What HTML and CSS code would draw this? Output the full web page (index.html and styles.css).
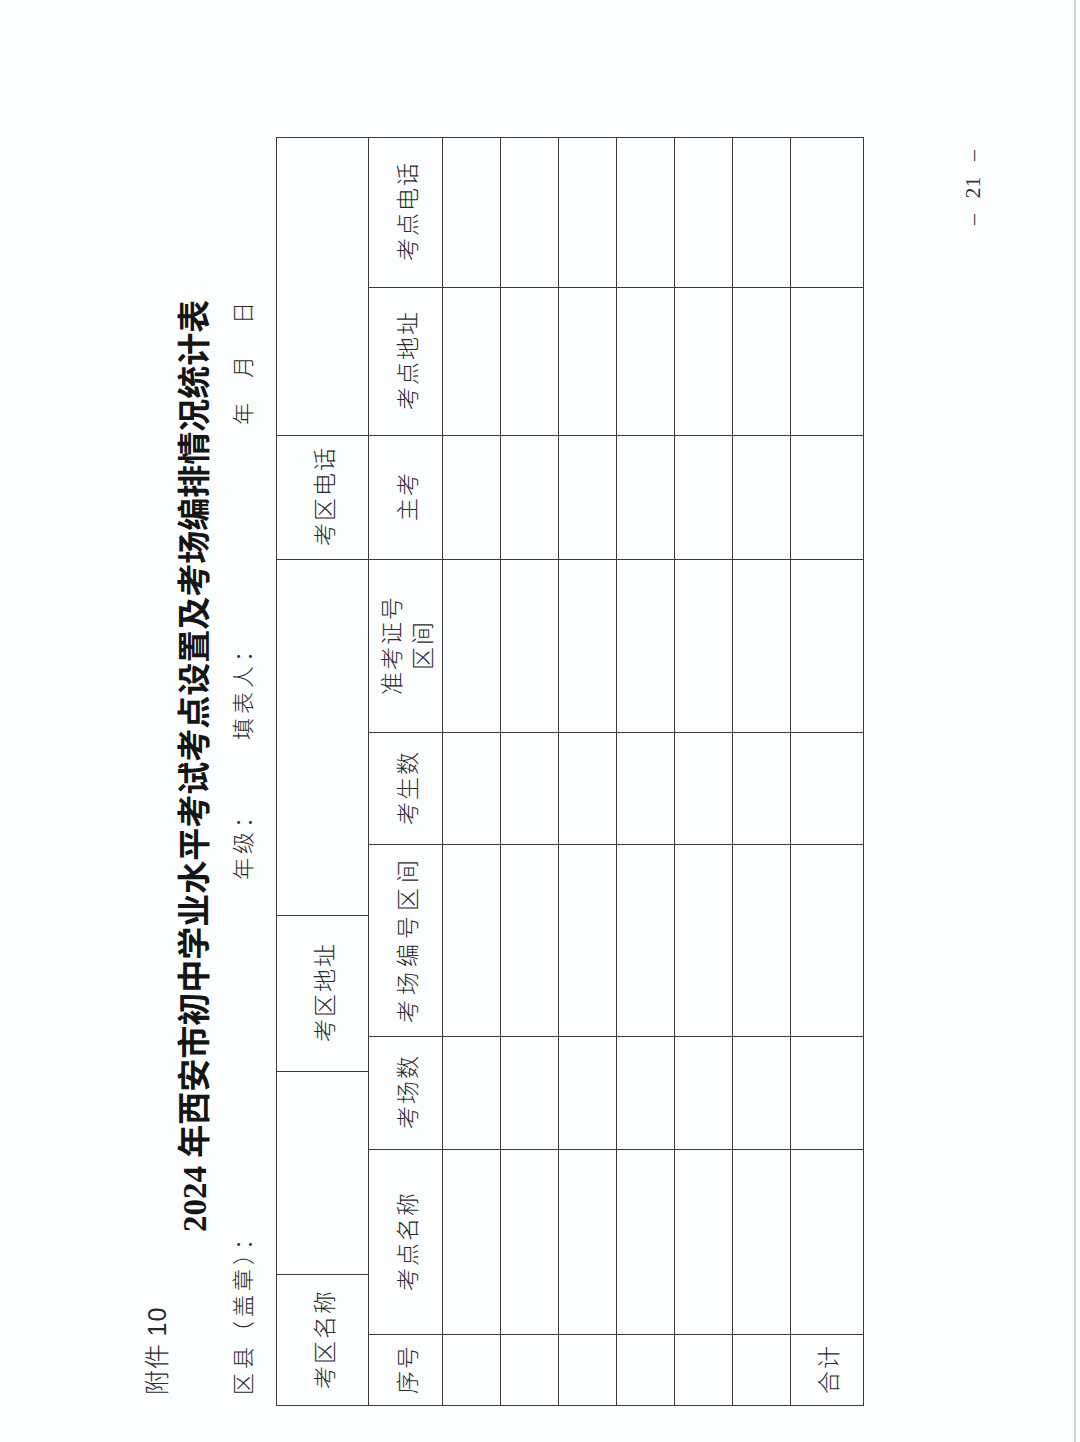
FILE: index.html
```html
<!DOCTYPE html>
<html lang="zh-CN">
<head>
<meta charset="utf-8">
<title>附件10</title>
<link rel="stylesheet" href="styles.css">
</head>
<body>
<div class="page">
  <div class="sheet">
    <div class="annex">附件 <span class="num">10</span></div>
    <h1 class="title">2024 年西安市初中学业水平考试考点设置及考场编排情况统计表</h1>
    <div class="meta">
      <span class="m-county">区县（盖章）：</span>
      <span class="m-grade">年级：</span>
      <span class="m-filler">填表人：</span>
      <span class="m-y">年</span><span class="m-m">月</span><span class="m-d">日</span>
    </div>
    <div class="grid">
      <div class="cell s2">考区名称</div>
      <div class="cell s2"></div>
      <div class="cell s2">考区地址</div>
      <div class="cell s3"></div>
      <div class="cell">考区电话</div>
      <div class="cell s2"></div>

      <div class="cell">序号</div>
      <div class="cell s2">考点名称</div>
      <div class="cell s2">考场数</div>
      <div class="cell s2 wide">考场编号区间</div>
      <div class="cell">考生数</div>
      <div class="cell two">准考证号<br>区间</div>
      <div class="cell">主考</div>
      <div class="cell">考点地址</div>
      <div class="cell">考点电话</div>

      <div class="cell"></div><div class="cell s2"></div><div class="cell s2"></div><div class="cell s2"></div><div class="cell"></div><div class="cell"></div><div class="cell"></div><div class="cell"></div><div class="cell"></div>
      <div class="cell"></div><div class="cell s2"></div><div class="cell s2"></div><div class="cell s2"></div><div class="cell"></div><div class="cell"></div><div class="cell"></div><div class="cell"></div><div class="cell"></div>
      <div class="cell"></div><div class="cell s2"></div><div class="cell s2"></div><div class="cell s2"></div><div class="cell"></div><div class="cell"></div><div class="cell"></div><div class="cell"></div><div class="cell"></div>
      <div class="cell"></div><div class="cell s2"></div><div class="cell s2"></div><div class="cell s2"></div><div class="cell"></div><div class="cell"></div><div class="cell"></div><div class="cell"></div><div class="cell"></div>
      <div class="cell"></div><div class="cell s2"></div><div class="cell s2"></div><div class="cell s2"></div><div class="cell"></div><div class="cell"></div><div class="cell"></div><div class="cell"></div><div class="cell"></div>
      <div class="cell"></div><div class="cell s2"></div><div class="cell s2"></div><div class="cell s2"></div><div class="cell"></div><div class="cell"></div><div class="cell"></div><div class="cell"></div><div class="cell"></div>

      <div class="cell">合计</div><div class="cell s2"></div><div class="cell s2"></div><div class="cell s2"></div><div class="cell"></div><div class="cell"></div><div class="cell"></div><div class="cell"></div><div class="cell"></div>
    </div>
    <div class="pageno">– 21 –</div>
  </div>
  <div class="edge"></div>
</div>
</body>
</html>
```

FILE: styles.css
```css
html, body {
  margin: 0;
  padding: 0;
  width: 1080px;
  height: 1442px;
  overflow: hidden;
  background: #fbfdfe;
}

/* The scanned sheet is a landscape page turned on its side:
   lay it out in a sideways writing mode and turn it half a turn,
   so lines read bottom-to-top and stack from left to right. */
.page {
  writing-mode: vertical-rl;
  text-orientation: sideways;
  transform: rotate(180deg);
  inline-size: 1442px;
  block-size: 1080px;
  font-family: "Noto Sans CJK SC", sans-serif;
  font-weight: 300;
  color: #2a2a2a;
}

.sheet {
  padding-block-start: 140px;
  padding-inline-start: 36px;
}

.annex {
  margin-inline-start: 11px;
  font-size: 25px;
  line-height: 30px;
  block-size: 30px;
  letter-spacing: 1px;
}

.annex .num {
  font-family: "Liberation Sans", sans-serif;
}

.title {
  margin: 0;
  margin-block-start: 7px;
  padding-inline-start: 174px;
  font-family: "Liberation Serif", "Noto Sans CJK SC", serif;
  font-weight: 700;
  font-size: 33px;
  line-height: 36px;
  block-size: 36px;
  color: #151515;
  white-space: nowrap;
}

.meta {
  display: flex;
  margin-block-start: 15px;
  font-size: 22px;
  line-height: 26px;
  block-size: 26px;
  letter-spacing: 4px;
}

.m-county { margin-inline-start: 11px; inline-size: 515px; }
.m-grade { inline-size: 140px; }
.m-filler { inline-size: 315px; }
.m-y { inline-size: 47px; }
.m-m { inline-size: 54px; }

.grid {
  margin-block-start: 22px;
  display: grid;
  inline-size: max-content;
  grid-template-columns: 71px 60px 125px 78px 35px 121px 71px 112px 173px 124px 148px 150px;
  grid-template-rows: 92px 74px repeat(6, 58px) 73px;
  border-block-start: 1.5px solid #3a3a3a;
  border-inline-start: 1.5px solid #3a3a3a;
}

.cell {
  box-sizing: border-box;
  border-inline-end: 1.5px solid #3a3a3a;
  border-block-end: 1.5px solid #3a3a3a;
  display: flex;
  align-items: center;
  justify-content: center;
  text-align: center;
  font-size: 23px;
  line-height: 30px;
  letter-spacing: 2px;
  padding-inline-start: 2px;
}

.s2 { grid-column: span 2; }
.s3 { grid-column: span 3; }
.wide { letter-spacing: 5px; }
.two { line-height: 31px; }

.pageno {
  margin-block-start: 97px;
  padding-inline-end: 150px;
  text-align: end;
  font-family: "Liberation Serif", serif;
  font-size: 22px;
  line-height: 24px;
  block-size: 24px;
  word-spacing: 10px;
  color: #333;
}

.edge {
  margin-block-start: 89px;
  block-size: 2px;
  background: #d3d6d8;
}
```
